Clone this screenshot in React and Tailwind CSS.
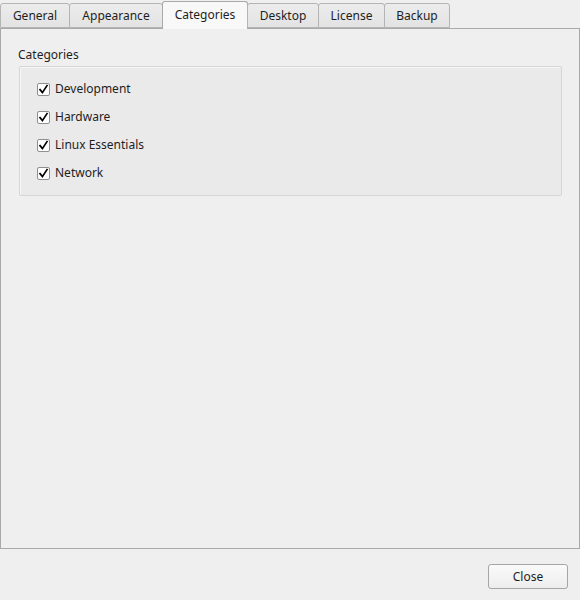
import React from 'react';

const TABS = [
  { label: 'General', w: 'w-[70px]' },
  { label: 'Appearance', w: 'w-[94px]' },
  { label: 'Categories', w: 'w-[86px]', active: true },
  { label: 'Desktop', w: 'w-[72px]' },
  { label: 'License', w: 'w-[67px]' },
  { label: 'Backup', w: 'w-[66px]' },
];

const CATEGORIES = ['Development', 'Hardware', 'Linux Essentials', 'Network'];

const Check = () => (
  <span className="w-[13px] h-[13px] border border-[#8f8f8f] bg-white rounded-[2px] flex items-center justify-center shrink-0">
    <svg width="11" height="11" viewBox="0 0 11 11">
      <path d="M2 5.6 L4.4 8.6 L9 1.6" fill="none" stroke="#000" strokeWidth="1.7" strokeLinecap="square" />
    </svg>
  </span>
);

export default function App() {
  return (
    <div className="w-[580px] h-[600px] bg-[#efefef] flex flex-col text-[12px] text-[#1e1e1e] font-['Noto_Sans',sans-serif]">
      {/* tab bar */}
      <div className="h-[28px] flex items-end relative z-10">
        {TABS.map((t) =>
          t.active ? (
            <div
              key={t.label}
              className={`${t.w} h-[28px] -ml-px flex items-center justify-center border border-b-0 border-[#a9a9a9] rounded-t-[3px] bg-[#f8f8f8] mb-[-1px] pb-px`}
            >
              {t.label}
            </div>
          ) : (
            <div
              key={t.label}
              className={`${t.w} h-[25px] -ml-px first:ml-0 flex items-center justify-center border border-[#b4b4b4] rounded-t-[3px] bg-gradient-to-b from-[#ececec] to-[#e3e3e3]`}
            >
              {t.label}
            </div>
          )
        )}
      </div>

      {/* pane */}
      <div className="h-[521px] border border-[#a9a9a9] bg-[#efefef] pt-[17px] pl-[17px] pr-[17px]">
        <div className="leading-[17px]">Categories</div>
        <div className="mt-[3px] h-[130px] ml-px border border-[#d6d6d6] rounded-[2px] bg-[#eaeaea] shadow-[inset_1px_1px_0_#f6f6f6] pt-[8px] pl-[17px] flex flex-col">
          {CATEGORIES.map((c) => (
            <div key={c} className="h-[28px] flex items-center gap-[5px]">
              <Check />
              <span>{c}</span>
            </div>
          ))}
        </div>
      </div>

      {/* footer */}
      <div className="flex-1 flex justify-end items-start pt-[15px] pr-[12px]">
        <button className="w-[80px] h-[25px] border border-[#a6a6a6] rounded-[3px] bg-gradient-to-b from-[#fafafa] to-[#ededed] text-[12px] text-[#1e1e1e]">
          Close
        </button>
      </div>
    </div>
  );
}
